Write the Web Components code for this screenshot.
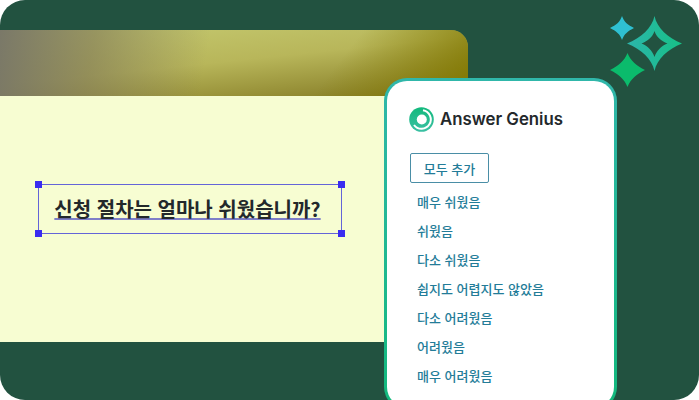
<!DOCTYPE html>
<html lang="ko"><head><meta charset="utf-8"><style>
html,body{margin:0;padding:0;background:#fff}
body{width:699px;height:400px;overflow:hidden;font-family:"Noto Sans CJK KR","Noto Sans",sans-serif}
</style></head><body>
<hero-tile>
  <survey-question slot="question">신청 절차는 얼마나 쉬웠습니까?</survey-question>
  <sparkle-mark slot="sparkle"></sparkle-mark>
  <answer-card slot="card">
    <answer-option>매우 쉬웠음</answer-option>
    <answer-option>쉬웠음</answer-option>
    <answer-option>다소 쉬웠음</answer-option>
    <answer-option>쉽지도 어렵지도 않았음</answer-option>
    <answer-option>다소 어려웠음</answer-option>
    <answer-option>어려웠음</answer-option>
    <answer-option>매우 어려웠음</answer-option>
  </answer-card>
</hero-tile>
<script>
function def(name,html){customElements.define(name,class extends HTMLElement{constructor(){super();this.attachShadow({mode:"open"}).innerHTML=html}})}
def("hero-tile",`<style>
:host{display:block;position:relative;width:699px;height:400px;background:#225240;border-radius:25px;overflow:hidden}
.stage{display:flex;flex-direction:column;padding-top:30px}
.banner{width:468px;height:66px;border-top-right-radius:17px;
background:
 linear-gradient(100deg,rgba(118,116,104,.95) 0%,rgba(125,118,88,.62) 20%,rgba(130,125,90,0) 44%),
 linear-gradient(174deg,#c6cb72 0%,#b8b65a 48%,#807620 100%);position:relative;overflow:hidden}
.banner::after{content:"";position:absolute;inset:0;background:linear-gradient(128deg,rgba(130,120,0,0) 70%,rgba(130,120,0,.9) 98%)}
.panel{width:400px;height:246px;background:#f7fdd2;display:flex;align-items:center;padding-left:38px;box-sizing:border-box;padding-bottom:20px}
</style>
<div class="stage"><div class="banner"></div><div class="panel"><slot name="question"></slot></div></div>
<slot name="sparkle"></slot><slot name="card"></slot>`);
def("survey-question",`<style>
:host{display:block;position:relative;width:304px;height:50px;box-sizing:border-box;border:1.500px solid #6464d8;color:#23282b;font:700 20px/1 "Noto Sans CJK KR",sans-serif}
.t{display:flex;justify-content:center;align-items:center;height:100%;white-space:nowrap;padding:0 5px 1px 0;box-sizing:border-box}
u{text-decoration:underline;text-decoration-color:#7f7fc8;text-decoration-thickness:1.500px;text-underline-offset:1px}
i{position:absolute;width:7px;height:7px;background:#3a2bf0}
.a{left:-4px;top:-4px}.b{right:-4px;top:-4px}.c{left:-4px;bottom:-4px}.d{right:-4px;bottom:-4px}
</style><div class="t"><u><slot></slot></u></div><i class="a"></i><i class="b"></i><i class="c"></i><i class="d"></i>`);
def("sparkle-mark",`<style>
:host{display:block;position:absolute;left:610px;top:15px;width:74px;height:74px}
svg{display:block}
</style><svg width="74" height="74" viewBox="0 0 74 74">
<defs><linearGradient id="g" x1="0" y1="0" x2="1" y2="0"><stop offset="0" stop-color="#2cb5ab"/><stop offset="1" stop-color="#17c086"/></linearGradient></defs>
<path d="M12 1 C14 7 18 10 24 13 C18 16 14 19 12 25 C10 19 6 16 0 13 C6 10 10 7 12 1Z" fill="#2fc0d2"/>
<path d="M17.500 38 C20.500 46 27 51 35 55 C27 59 20.500 64 17.500 72 C14.500 64 8 59 0 55 C8 51 14.500 46 17.500 38Z" fill="#0bbb6c"/>
<path fill-rule="evenodd" fill="url(#g)" d="M44.500 1 C47 13 58 23 72 28.500 C58 34 47 44 44.500 56 C42 44 31 34 17 28.500 C31 23 42 13 44.500 1Z M44.500 16 C42.500 22 38 26 31.500 28.500 C38 31 42.500 36 44.500 42 C46.500 36 51 31 57.500 28.500 C51 26 46.500 22 44.500 16Z"/>
</svg>`);
def("answer-card",`<style>
:host{display:block;position:absolute;left:384px;top:78px;width:233px;height:332px;box-sizing:border-box;background:linear-gradient(#fff,#fff) padding-box,linear-gradient(#30b7aa,#12b97c) border-box;border:3px solid transparent;border-radius:23px;padding:25px 22px}
.head{display:flex;align-items:center;gap:6px;height:26px;color:#23282b;font:600 16.800px/1 Inter,"Noto Sans",sans-serif}
.btn{display:flex;align-items:center;justify-content:center;width:79px;height:30px;box-sizing:border-box;margin-top:21px;margin-left:1px;border:1px solid #4a8ea6;border-radius:2px;color:#237c98;font:500 13px/1 "Noto Sans CJK KR",sans-serif}
.list{display:flex;flex-direction:column;padding:4px 0 0 8px}
svg{display:block;flex:none}
</style>
<div class="head"><svg width="25" height="25" viewBox="0 0 25 25" fill="none">
<defs><linearGradient id="r" x1="0" y1="0" x2="0" y2="1"><stop offset="0" stop-color="#12b97c"/><stop offset="1" stop-color="#3cc0a4"/></linearGradient></defs>
<circle cx="12.500" cy="12.500" r="12.300" fill="url(#r)"/>
<path d="M14 3.300A9.300 9.300 0 1 1 5 18" stroke="#fff" stroke-width="2"/>
<circle cx="12.800" cy="12.500" r="5" fill="#fff"/>
</svg><span>Answer Genius</span></div>
<div class="btn">모두 추가</div>
<div class="list"><slot></slot></div>`);
def("answer-option",`<style>
:host{display:block;height:29px;color:#237c98;font:500 13px/29px "Noto Sans CJK KR",sans-serif;white-space:nowrap}
</style><slot></slot>`);
</script></body></html>
